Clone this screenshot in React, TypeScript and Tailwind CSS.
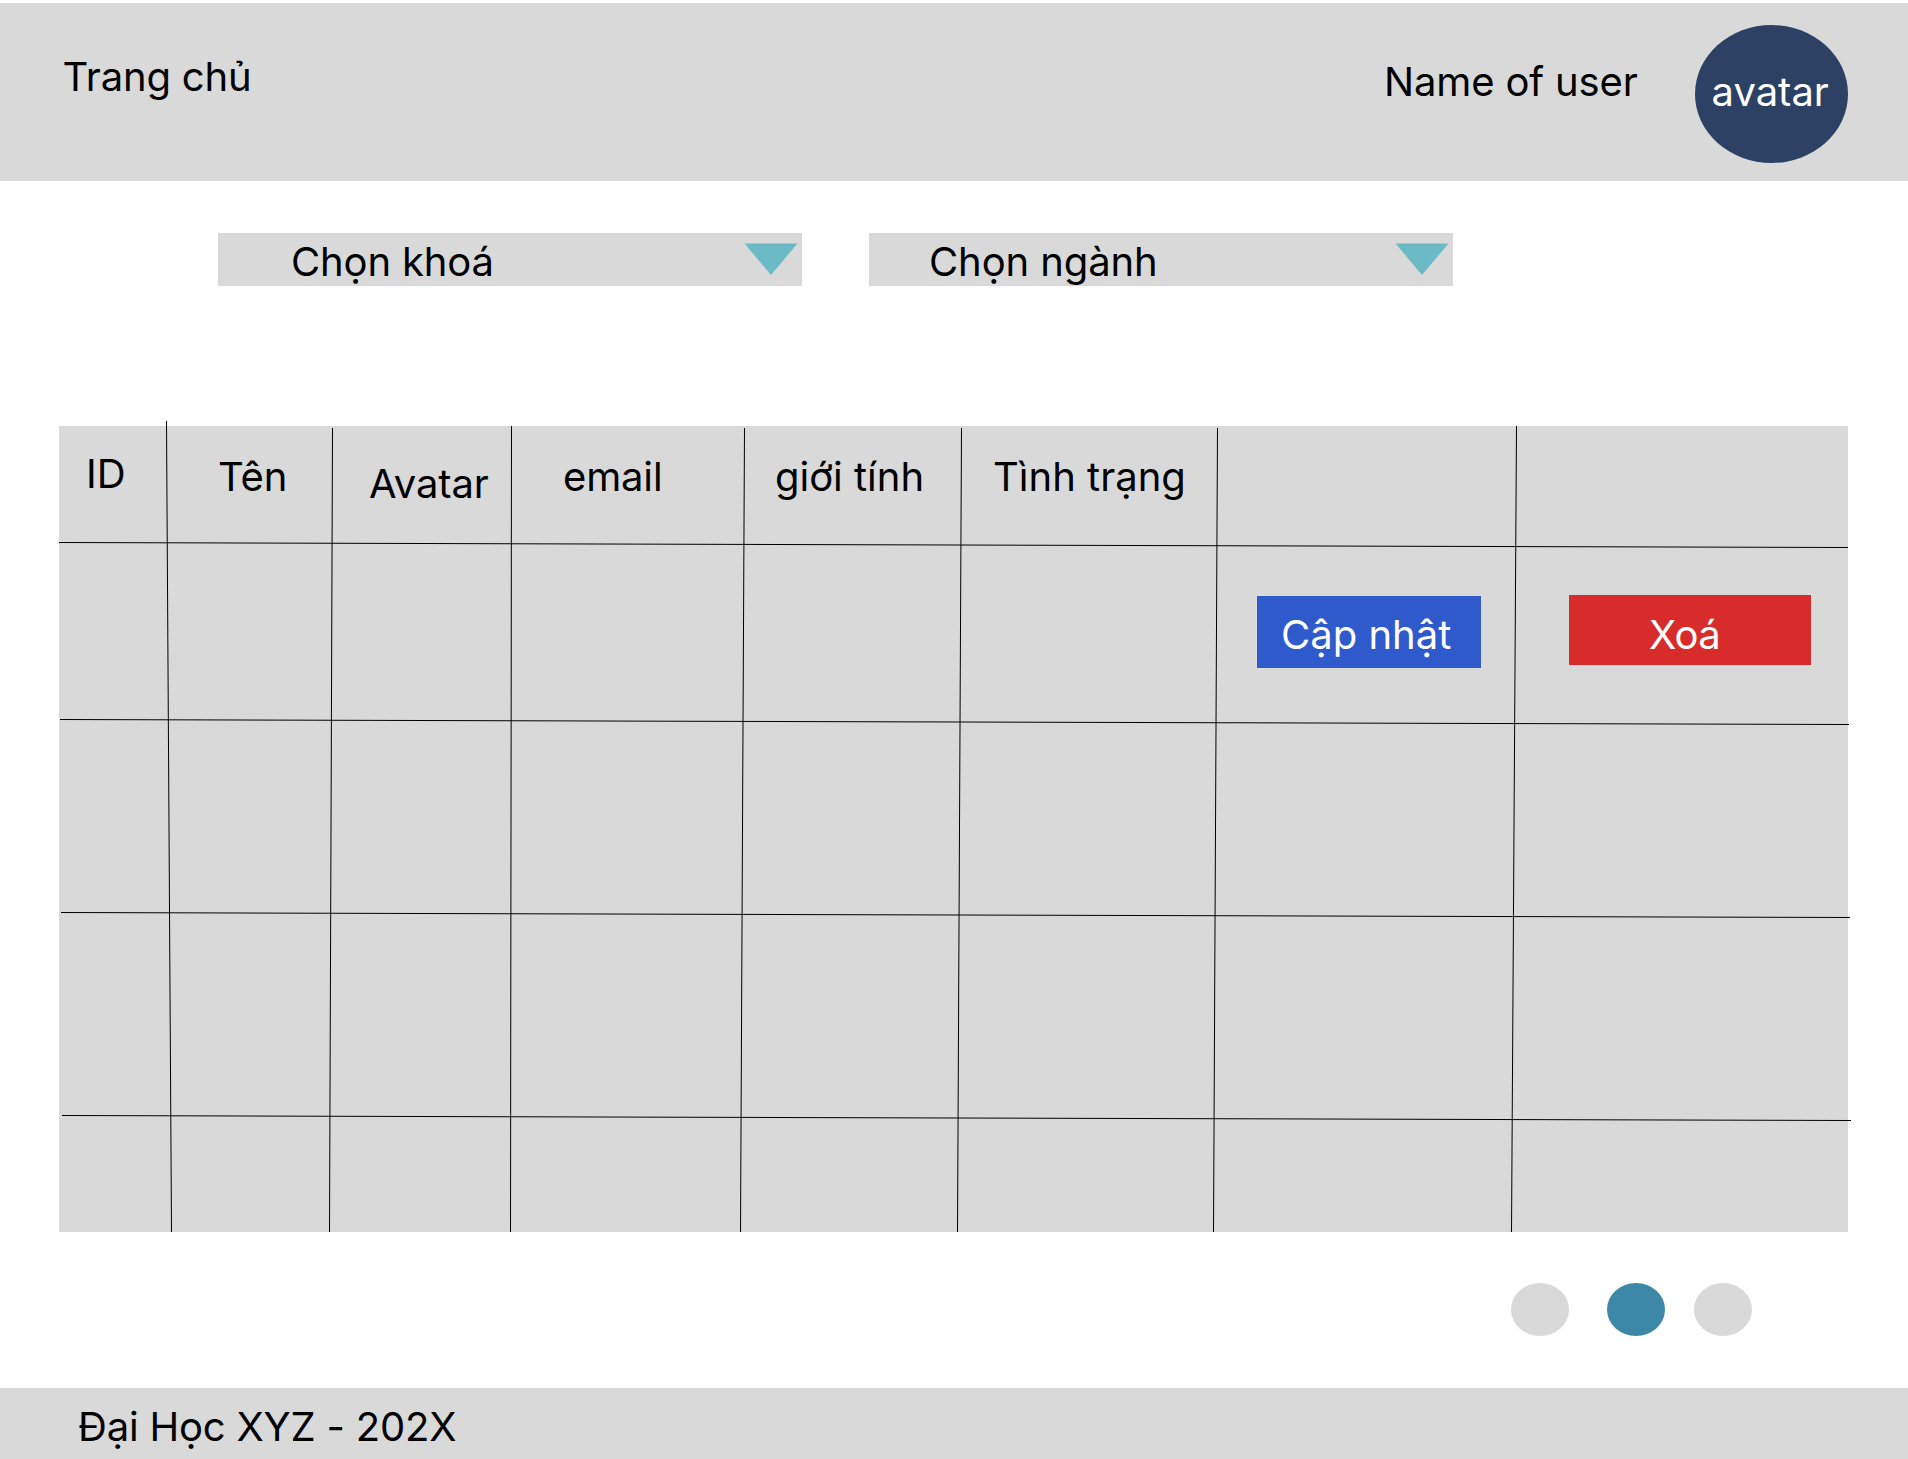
const columns = [
  { label: "ID", className: "pl-[27px] pt-[24px]" },
  { label: "Tên", className: "pl-[51px] pt-[27px] tracking-[-0.1px]" },
  { label: "Avatar", className: "pl-[36px] pt-[34px] tracking-[-0.1px]" },
  { label: "email", className: "pl-[51px] pt-[27px] tracking-[-0.15px]" },
  { label: "giới tính", className: "pl-[30px] pt-[27px]" },
  { label: "Tình trạng", className: "pl-[31px] pt-[27px]" },
  { label: "", className: "" },
  { label: "", className: "" },
];

// Ruled lines in table coordinates: x1, y1, x2, y2
const rules = [
  [107.5, -5, 112.5, 806],
  [273.5, 2, 270.5, 806],
  [452.5, 0, 451.5, 806],
  [685.5, 2, 681.5, 806],
  [902.5, 2, 898.5, 806],
  [1158.5, 2, 1154.5, 806],
  [1457.5, 0, 1452.5, 806],
  [0, 116.5, 1789, 121.5],
  [1, 293.5, 1790, 298.5],
  [2, 486.5, 1791, 491.5],
  [3, 689.5, 1792, 694.5],
];

function Select({ label, className }: { label: string; className: string }) {
  return (
    <button className={`flex h-[53px] w-[584px] items-start justify-between bg-[#d9d9d9] pt-[5px] pr-1 text-left ${className}`}>
      <span>{label}</span>
      <svg className="mt-[5px] h-8 w-[54px]" viewBox="0 0 54 32" fill="#6dbac7">
        <path d="M0.5 0.5H53.5L27 32Z" />
      </svg>
    </button>
  );
}

export default function App() {
  return (
    <div className="flex h-[1459px] w-[1908px] flex-col overflow-hidden bg-white pt-[3px] font-['Inter',sans-serif] text-[40px] leading-[48px] whitespace-nowrap text-black">
      <header className="flex h-[178px] shrink-0 items-start justify-between bg-[#d9d9d9] pr-[60px] pl-[62.5px]">
        <a className="mt-[50px] tracking-[-0.2px]">Trang chủ</a>
        <div className="flex items-start">
          <span className="mt-[55px] w-[311px] tracking-[-0.15px]">Name of user</span>
          <div className="mt-[22px] h-[138px] w-[153px] rounded-[50%] bg-[#2c4163] pt-[43px] pl-[16.5px] text-white">avatar</div>
        </div>
      </header>

      <div className="mt-[52px] ml-[218px] flex shrink-0 gap-[67px]">
        <Select label="Chọn khoá" className="pl-[73px] tracking-[-0.15px]" />
        <Select label="Chọn ngành" className="pl-[60px] tracking-[-0.1px]" />
      </div>

      <main className="relative mt-[140px] ml-[59px] grid h-[806px] w-[1789px] shrink-0 grid-cols-[108px_166px_179px_233px_217px_256px_299px_331px] grid-rows-[117px_177px_193px_203px_116px] bg-[#d9d9d9]">
        {columns.map((column, i) => (
          <div key={i} className={column.className}>{column.label}</div>
        ))}
        <div className="col-start-7 row-start-2 pt-[53px] pl-[39px]">
          <button className="block h-[72px] w-[224px] bg-[#2f5acb] pt-[15px] pb-[9px] pl-[24px] text-left text-white">Cập nhật</button>
        </div>
        <div className="col-start-8 row-start-2 pt-[52px] pl-[52px]">
          <button className="block h-[70px] w-[242px] bg-[#d82c2c] pt-[16px] pb-[6px] pl-[80px] text-left tracking-[-0.6px] text-white">Xoá</button>
        </div>
        <svg className="pointer-events-none absolute inset-0 overflow-visible" width="1789" height="806" stroke="black" strokeWidth="1">
          {rules.map(([x1, y1, x2, y2], i) => (
            <line key={i} x1={x1} y1={y1} x2={x2} y2={y2} />
          ))}
        </svg>
      </main>

      <nav className="mt-[51px] ml-[1511px] flex shrink-0">
        <span className="h-[53px] w-[58px] rounded-[50%] bg-[#d9d9d9]" />
        <span className="ml-[38px] h-[53px] w-[58px] rounded-[50%] bg-[#3d88a8]" />
        <span className="ml-[29px] h-[53px] w-[58px] rounded-[50%] bg-[#d9d9d9]" />
      </nav>

      <footer className="mt-[52px] h-[71px] shrink-0 bg-[#d9d9d9] pt-[15px] pl-[78px] tracking-[-0.2px]">Đại Học XYZ - 202X</footer>
    </div>
  );
}
